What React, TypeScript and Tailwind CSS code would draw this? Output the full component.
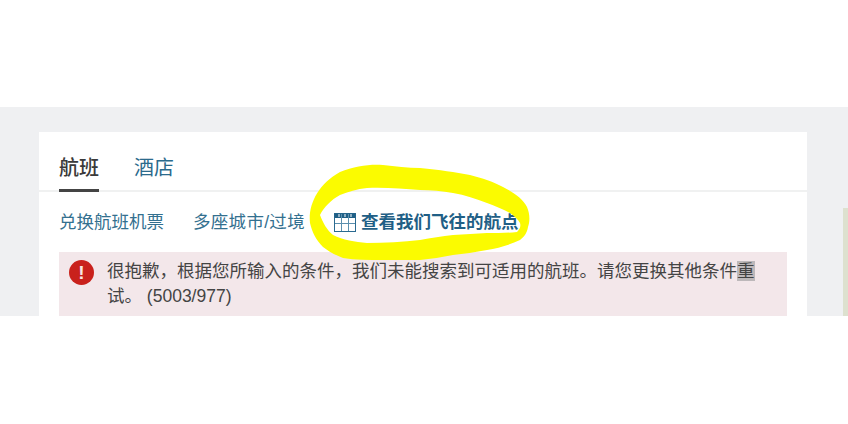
import React from 'react';

const cjk = "font-['Liberation_Sans','Noto_Sans_CJK_SC',sans-serif]";

const TableIcon = () => (
  <svg width="22" height="19" viewBox="0 0 22 19" className="shrink-0">
    <rect x="0.5" y="0.5" width="21" height="18" fill="#fff" stroke="#2a6a90" />
    <rect x="0.5" y="0.5" width="21" height="4.5" fill="#1f5f86" />
    <path d="M7.5 1v17M14.5 1v17M1 10.5h20" stroke="#5b8fae" strokeWidth="1" fill="none" />
    <path d="M5 1v3M11 1v3M17 1v3" stroke="#fff" strokeWidth="1" />
  </svg>
);

const ErrorIcon = () => (
  <div className="w-[25px] h-[25px] shrink-0 rounded-full bg-[#c9211c] flex items-center justify-center text-[#f8e6e2] text-[19px] font-bold leading-none">
    !
  </div>
);

// hand-drawn marker ring around the link
const YellowRing = () => (
  <svg width="848" height="424" viewBox="0 0 848 424" className="absolute left-0 top-0 pointer-events-none">
    <path
      fillRule="evenodd"
      fill="#fbfb00"
      d="M310 223C308 205 318 184 340 172C355 166 370 164 383 165C395 166 408 168 420 168C440 170 455 172 470 175C482 178 494 182 503 187C515 193 523 199 527 207C530 214 530 221 528 227C527 233 524 237 520 240C510 245 498 248 487 250C475 252 464 254 453 255C442 257 431 259 420 260C408 260 396 260 383 260C368 260 355 260 343 258C335 255 328 251 323 247C316 240 312 232 310 223Z
         M320 215C323 223 327 230 333 235C343 240 355 242 367 243C385 243 403 242 420 240C431 238 442 236 453 235C465 234 476 234 487 233C497 233 507 233 517 232C520 229 521 226 520 223C518 219 514 216 510 213C503 209 495 206 487 203C476 199 465 195 453 193C442 191 431 190 420 190C403 189 385 187 367 188C357 189 348 192 340 195C331 200 324 207 320 215Z"
    />
  </svg>
);

export default function App() {
  return (
    <div className={`relative w-[848px] h-[424px] bg-white overflow-hidden pt-[107px] ${cjk}`}>
      <div className="relative h-[209px] bg-[#eff0f2] pt-[25px] pl-[39px] overflow-hidden">
        <div className="w-[768px] h-[184px] bg-white flex flex-col">
          <div className="h-[60px] px-5 flex gap-[35px] border-b-2 border-[#f0f1f1]">
            <div className="h-[60px] border-b-[3px] border-[#444] pt-[21px] text-[20px] leading-[30px] font-medium text-[#3a3a3a]">
              航班
            </div>
            <div className="pt-[21px] text-[20px] leading-[30px] text-[#2b6a8c]">酒店</div>
          </div>
          <div className="h-[60px] px-5 flex items-center gap-[29px] text-[17.5px] text-[#33708f]">
            <span>兑换航班机票</span>
            <span className="tracking-[0.3px]">多座城市/过境</span>
            <span className="flex items-center gap-[5px] font-bold text-[#1f5f86] tracking-normal">
              <TableIcon />
              查看我们飞往的航点
            </span>
          </div>
          <div className="mx-5 h-[64px] bg-[#f3e7ea] flex gap-[13px] pl-[10px] pt-[8px]">
            <ErrorIcon />
            <p className="w-[655px] text-[17.5px] leading-[25px] text-[#444] -mt-[1px]">
              很抱歉，根据您所输入的条件，我们未能搜索到可适用的航班。请您更换其他条件<span className="bg-[#bdb8ba]">重</span>试。 (5003/977)
            </p>
          </div>
        </div>
        <div className="absolute right-0 top-[101px] w-[5px] h-[108px] bg-[#dde1cf]" />
      </div>
      <YellowRing />
    </div>
  );
}
